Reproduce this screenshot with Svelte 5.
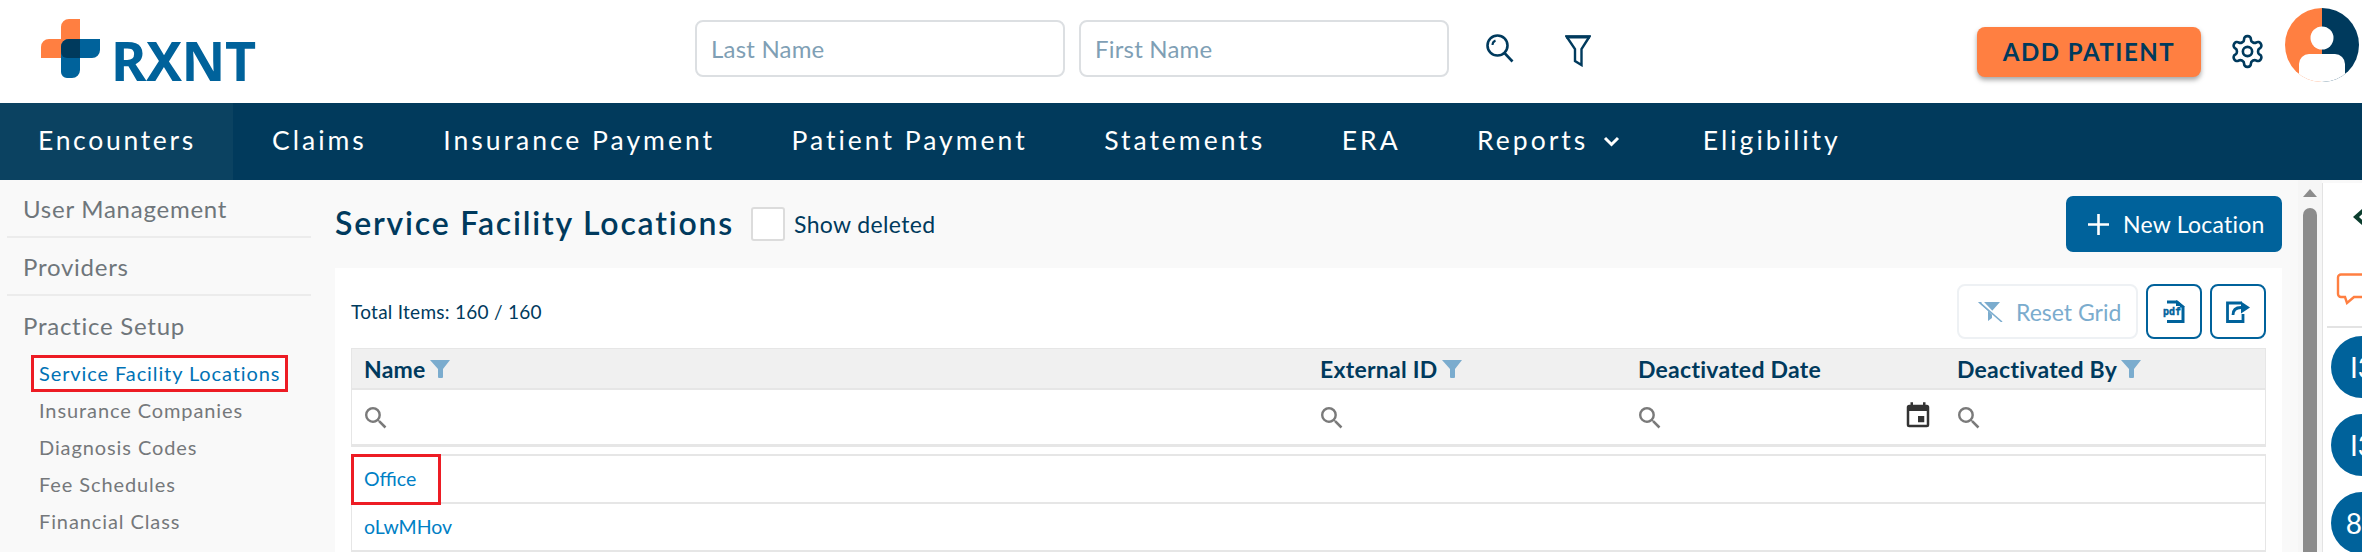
<script>
	const tabs = ['Encounters', 'Claims', 'Insurance Payment', 'Patient Payment', 'Statements', 'ERA', 'Reports', 'Eligibility'];
	const subItems = ['Service Facility Locations', 'Insurance Companies', 'Diagnosis Codes', 'Fee Schedules', 'Financial Class', 'Payment Codes'];
	const columns = [
		{ name: 'Name', filter: true },
		{ name: 'External ID', filter: true },
		{ name: 'Deactivated Date', filter: false },
		{ name: 'Deactivated By', filter: true }
	];
	const rows = ['Office', 'oLwMHov'];
	const people = ['I3', 'I3', '80'];
	const searchPath =
		'M15.5 14h-.79l-.28-.27A6.471 6.471 0 0 0 16 9.5 6.5 6.5 0 1 0 9.5 16c1.61 0 3.09-.59 4.23-1.57l.27.28v.79l5 4.99L20.49 19l-4.99-5zm-6 0C7.01 14 5 11.99 5 9.5S7.01 5 9.5 5 14 7.01 14 9.5 11.99 14 9.5 14z';
</script>

<div class="page">
	<header class="top">
		<div class="logo">
			<svg width="59" height="59" viewBox="0 0 59 59">
				<path fill="#ff7f41" d="M28 0H39V39H0V28a8 8 0 0 1 8-8H20V8a8 8 0 0 1 8-8z" />
				<path fill="#00629b" d="M28 20H59V31a8 8 0 0 1-8 8H39V51a8 8 0 0 1-8 8H26a6 6 0 0 1-6-6V28a8 8 0 0 1 8-8z" />
				<path fill="#003a5d" d="M28 20H39V39H26a6 6 0 0 1-6-6V28a8 8 0 0 1 8-8z" />
			</svg>
			<span class="logo-text">RXNT</span>
		</div>
		<div class="search">
			<input class="name-input" placeholder="Last Name" />
			<input class="name-input" placeholder="First Name" />
			<svg class="search-icon" width="28" height="30" viewBox="0 0 28 30" fill="none" stroke="#003a5d" stroke-width="2.6">
				<circle cx="11.5" cy="11.5" r="10" />
				<path d="M6.5 11a5 5 0 0 1 3-4.500" stroke-width="2" />
				<path d="M18.500 19l8 8.500" />
			</svg>
			<svg class="funnel-icon" width="26" height="32" viewBox="0 0 26 32" fill="none" stroke="#003a5d" stroke-width="2.4">
				<path d="M1.500 1.500H24.500L16.500 14V30L10 26V14z" />
				<path d="M1 2H25" stroke-width="3" />
			</svg>
		</div>
		<div class="actions">
			<button class="add-patient">ADD PATIENT</button>
			<svg width="37" height="37" viewBox="0 0 24 24" fill="none" stroke="#003a5d" stroke-width="1.700">
				<path d="M12.220 2h-.44a2 2 0 0 0-2 2v.18a2 2 0 0 1-1 1.730l-.43.25a2 2 0 0 1-2 0l-.15-.08a2 2 0 0 0-2.730.73l-.22.38a2 2 0 0 0 .73 2.730l.15.1a2 2 0 0 1 1 1.720v.51a2 2 0 0 1-1 1.740l-.15.09a2 2 0 0 0-.73 2.730l.22.38a2 2 0 0 0 2.730.73l.15-.08a2 2 0 0 1 2 0l.43.25a2 2 0 0 1 1 1.730V20a2 2 0 0 0 2 2h.44a2 2 0 0 0 2-2v-.18a2 2 0 0 1 1-1.730l.43-.25a2 2 0 0 1 2 0l.15.08a2 2 0 0 0 2.730-.73l.22-.39a2 2 0 0 0-.73-2.730l-.15-.08a2 2 0 0 1-1-1.740v-.5a2 2 0 0 1 1-1.740l.15-.09a2 2 0 0 0 .73-2.730l-.22-.38a2 2 0 0 0-2.730-.73l-.15.08a2 2 0 0 1-2 0l-.43-.25a2 2 0 0 1-1-1.730V4a2 2 0 0 0-2-2z" />
				<circle cx="12" cy="12" r="3" />
			</svg>
			<svg class="avatar" width="74" height="74" viewBox="0 0 74 74">
				<clipPath id="avatar-clip"><circle cx="37" cy="37" r="37" /></clipPath>
				<g clip-path="url(#avatar-clip)">
					<rect width="37" height="74" fill="#ff7f41" />
					<rect x="37" width="37" height="74" fill="#003a5d" />
					<circle cx="37" cy="30" r="11.500" fill="#fff" />
					<path fill="#fff" d="M14 74V56a10 10 0 0 1 10-10H50a10 10 0 0 1 10 10V74z" />
				</g>
			</svg>
		</div>
	</header>

	<nav class="tabs">
		{#each tabs as tab, i}
			<div class="tab" class:current={i === 0}>
				{tab}
				{#if tab === 'Reports'}
					<svg width="17" height="11" viewBox="0 0 17 11" fill="none" stroke="#fff" stroke-width="3">
						<path d="M2 2l6.500 6.500L15 2" />
					</svg>
				{/if}
			</div>
		{/each}
	</nav>

	<div class="body">
		<aside class="side">
			<div class="side-row">User Management</div>
			<div class="side-row">Providers</div>
			<div class="side-row open">Practice Setup</div>
			<div class="sub-list">
				{#each subItems as item, i}
					<div class="sub-item" class:marked={i === 0}>{item}</div>
				{/each}
			</div>
		</aside>

		<main class="main">
			<div class="page-head">
				<h1>Service Facility Locations</h1>
				<span class="checkbox"></span>
				<span class="show-deleted">Show deleted</span>
				<button class="new-location">
					<svg width="21" height="21" viewBox="0 0 21 21" stroke="#fff" stroke-width="2.600">
						<path d="M10.500 0V21M0 10.500H21" />
					</svg>
					New Location
				</button>
			</div>

			<section class="card">
				<div class="toolbar">
					<span class="total">Total Items: 160 / 160</span>
					<button class="reset">
						<svg width="25" height="20" viewBox="0 0 25 20">
							<path fill="#7bacce" d="M0 0H22L14 9V16L10 19V9z" />
							<path stroke="#fff" stroke-width="3" d="M4 0L22 19" />
							<path stroke="#7bacce" stroke-width="1.600" d="M1 0L24 20" />
						</svg>
						Reset Grid
					</button>
					<button class="square">
						<svg width="22" height="23" viewBox="0 0 22 23">
							<path fill="none" stroke="#00629b" stroke-width="3" d="M4 2H14L20 7V21.500H4" />
							<path fill="#00629b" d="M13 0L22 7H13z" />
							<rect y="6" width="17" height="11" fill="#fff" />
							<text x="0" y="15" class="pdf-label">pdf</text>
						</svg>
					</button>
					<button class="square">
						<svg width="24" height="23" viewBox="0 0 24 23" fill="none" stroke="#00629b" stroke-width="2.800">
							<path d="M16 3H1.500V21.500H17V14" />
							<path d="M7 15c0-5 3-7.500 8-7.500" />
							<path fill="#00629b" stroke="none" d="M15 1.500L24 7.500L15 13.500z" />
						</svg>
					</button>
				</div>

				<div class="grid head">
					{#each columns as col}
						<div class="head-cell">
							{col.name}
							{#if col.filter}
								<svg width="20" height="18" viewBox="0 0 20 18">
									<path fill="#7bacce" d="M0 0H20L13 9V17a1 1 0 0 1-1 1H9a1 1 0 0 1-1-1V9z" />
								</svg>
							{/if}
						</div>
					{/each}
				</div>
				<div class="grid filters">
					{#each columns as col}
						<div class="filter-cell">
							<svg width="22" height="22" viewBox="3 3 18 18" fill="#7a7a7a"><path d={searchPath} /></svg>
							{#if col.name === 'Deactivated Date'}
								<svg class="calendar" width="30" height="30" viewBox="0 0 24 24" fill="#333">
									<path d="M19 3h-1V1h-2v2H8V1H6v2H5a2 2 0 0 0-2 2v14a2 2 0 0 0 2 2h14a2 2 0 0 0 2-2V5a2 2 0 0 0-2-2zm0 16H5V8h14v11zM17 12h-5v5h5z" />
								</svg>
							{/if}
						</div>
					{/each}
				</div>
				<div class="rows">
					{#each rows as row, i}
						<div class="row">
							<a class="row-link" class:marked-link={i === 0} href="#top">{row}</a>
						</div>
					{/each}
				</div>
			</section>
		</main>

		<div class="scrollbar">
			<span class="arrow"></span>
			<span class="thumb"></span>
		</div>

		<aside class="panel">
			<svg class="back" width="20" height="22" viewBox="0 0 20 22" fill="none" stroke="#0b3d2e" stroke-width="4">
				<path d="M13 2L3 11l10 9" />
			</svg>
			<svg class="chat" width="40" height="32" viewBox="0 0 40 32" fill="none" stroke="#ff7f41" stroke-width="2.400">
				<path d="M40 1.500H5a3 3 0 0 0-3 3V21a3 3 0 0 0 3 3H9L11 30L18 24H40" />
			</svg>
			<div class="people">
				{#each people as p}
					<div class="person">{p}</div>
				{/each}
			</div>
		</aside>
	</div>
</div>

<style>
	:global(body) {
		margin: 0;
		overflow: hidden;
		background: #fff;
	}

	.page {
		width: 2362px;
		height: 552px;
		overflow: hidden;
		font-family: Lato, 'Noto Sans', sans-serif;
		color: #003a5d;
	}

	button {
		font-family: inherit;
		cursor: pointer;
	}

	/* top bar */
	.top {
		height: 103px;
		display: grid;
		grid-template-columns: 695px 1fr auto;
		align-items: center;
		box-sizing: border-box;
		padding-right: 3px;
	}

	.logo {
		display: flex;
		align-items: flex-start;
		padding-left: 41px;
		height: 59px;
		margin-top: -6px;
		gap: 11px;
	}

	.logo-text {
		font-family: 'Noto Sans', sans-serif;
		font-weight: 700;
		font-size: 54px;
		line-height: 59px;
		color: #00629b;
		margin-top: 12px;
		letter-spacing: -0.5px;
	}

	.search {
		display: flex;
		align-items: center;
		gap: 14px;
		margin-top: -6px;
	}

	.name-input {
		width: 370px;
		height: 57px;
		box-sizing: border-box;
		border: 2px solid #dcdfe2;
		border-radius: 8px;
		padding: 0 14px;
		font-family: inherit;
		font-size: 24px;
		letter-spacing: 0.2px;
		outline: none;
	}

	.name-input::placeholder {
		color: #7f9fb5;
		opacity: 1;
	}

	.search-icon {
		margin-left: 23px;
	}

	.funnel-icon {
		margin-left: 37px;
		margin-top: 4px;
	}

	.actions {
		display: flex;
		align-items: center;
	}

	.add-patient {
		width: 224px;
		height: 50px;
		border: none;
		border-radius: 8px;
		background: #ff7f41;
		color: #003a5d;
		font-weight: 700;
		font-size: 24px;
		letter-spacing: 1.500px;
		box-shadow: 0 3px 5px rgba(0, 0, 0, 0.35);
		margin-right: 28px;
	}

	.avatar {
		margin-left: 19px;
		margin-top: -14px;
	}

	/* main nav */
	.tabs {
		height: 77px;
		background: #013a5c;
		display: flex;
		color: #fff;
	}

	.tab {
		display: flex;
		align-items: center;
		gap: 15px;
		padding: 0 37.5px 4px 39px;
		font-size: 26.5px;
		letter-spacing: 3px;
	}

	.tab.current {
		background: #0b4261;
		padding-left: 38px;
		padding-right: 37px;
		letter-spacing: 2.700px;
	}

	.tab svg {
		margin: 3px 6px 0 0;
	}

	/* body */
	.body {
		height: 372px;
		display: grid;
		grid-template-columns: 335px 1fr 24px 40px;
		background: #f9f9f9;
		overflow: hidden;
	}

	.side {
		padding-left: 7px;
		width: 304px;
		color: #6f767b;
	}

	.side-row {
		height: 58px;
		box-sizing: border-box;
		display: flex;
		align-items: center;
		padding-left: 16px;
		font-size: 24px;
		letter-spacing: 0.750px;
		border-bottom: 2px solid #ececec;
	}

	.side-row.open {
		border-bottom: none;
		height: 59px;
		padding-bottom: 1px;
	}

	.sub-list {
		padding-left: 24px;
	}

	.sub-item {
		height: 37px;
		box-sizing: border-box;
		width: fit-content;
		display: flex;
		align-items: center;
		padding: 0 5px 2px;
		border: 3px solid transparent;
		font-size: 20px;
		letter-spacing: 0.900px;
		color: #75787b;
	}

	.sub-item.marked {
		border-color: #ed1c24;
		background: #fff;
		color: #0072b5;
	}

	.main {
		padding-right: 16px;
		min-width: 0;
	}

	.page-head {
		height: 88px;
		display: flex;
		align-items: center;
	}

	h1 {
		margin: 0;
		padding-bottom: 3px;
		font-family: 'Lato Semibold', Lato, sans-serif;
		font-size: 32px;
		font-weight: 600;
		letter-spacing: 1.800px;
		color: #003a5d;
	}

	.checkbox {
		width: 34px;
		height: 34px;
		box-sizing: border-box;
		background: #fff;
		border: 2px solid #dcdcdc;
		border-radius: 3px;
		margin-left: 17px;
	}

	.show-deleted {
		margin-left: 9px;
		font-size: 23px;
		letter-spacing: 0.350px;
	}

	.new-location {
		margin-left: auto;
		width: 216px;
		height: 56px;
		display: flex;
		align-items: center;
		gap: 14px;
		padding: 0 0 0 22px;
		border: none;
		border-radius: 7px;
		background: #00629b;
		color: #fff;
		font-size: 23px;
		letter-spacing: 0.250px;
	}

	.card {
		background: #fff;
		padding: 0 16px;
		height: 284px;
	}

	.toolbar {
		height: 80px;
		box-sizing: border-box;
		padding: 16px 0 9px;
		display: flex;
		align-items: center;
		gap: 8px;
	}

	.total {
		font-size: 19px;
		letter-spacing: 0.270px;
		margin-right: auto;
	}

	.reset {
		width: 181px;
		height: 55px;
		display: flex;
		align-items: center;
		gap: 13px;
		padding: 0 0 0 19px;
		background: #fff;
		border: 2px solid #eef1f4;
		border-radius: 8px;
		color: #7bacce;
		font-size: 23px;
	}

	.square {
		width: 56px;
		height: 55px;
		padding: 0;
		display: grid;
		place-items: center;
		background: #fff;
		border: 2px solid #00629b;
		border-radius: 8px;
	}

	.pdf-label {
		font-family: 'DejaVu Sans Mono', monospace;
		font-weight: 700;
		font-size: 10px;
		fill: #00629b;
		stroke: #00629b;
		stroke-width: 0.4px;
	}

	.grid {
		display: grid;
		grid-template-columns: 956px 318px 319px 1fr;
	}

	.head {
		height: 42px;
		box-sizing: border-box;
		background: #f0f0f0;
		border: 1px solid #e6e6e6;
		border-bottom-width: 2px;
	}

	.head-cell {
		display: flex;
		align-items: center;
		gap: 4px;
		padding-left: 12px;
		font-size: 23px;
		font-weight: 700;
		letter-spacing: 0.250px;
	}

	.filters {
		height: 57px;
		box-sizing: border-box;
		border: 1px solid #e6e6e6;
		border-top: none;
		border-bottom-width: 3px;
	}

	.filter-cell {
		display: flex;
		align-items: center;
		justify-content: space-between;
		padding: 0 12px 0 13px;
		margin-top: 1px;
	}

	.calendar {
		margin: -3px 0 0 0;
	}

	.rows {
		margin-top: 7px;
		border: 1px solid #e6e6e6;
		border-top-width: 2px;
		border-bottom: none;
	}

	.row {
		height: 48px;
		box-sizing: border-box;
		display: flex;
		align-items: center;
		padding: 0 0 2px 12px;
		border-bottom: 2px solid #e6e6e6;
		position: relative;
	}

	.row-link {
		color: #0080c5;
		font-size: 19.5px;
		text-decoration: none;
	}

	.row-link.marked-link::after {
		content: '';
		position: absolute;
		left: -1px;
		top: -2px;
		width: 90px;
		height: 51px;
		box-sizing: border-box;
		border: 3px solid #ed1c24;
	}

	/* fake scrollbar */
	.scrollbar {
		background: #f6f6f6;
		display: flex;
		flex-direction: column;
		align-items: center;
	}

	.arrow {
		margin-top: 9px;
		border-left: 7px solid transparent;
		border-right: 7px solid transparent;
		border-bottom: 8px solid #8c8c8c;
	}

	.thumb {
		margin-top: 11px;
		width: 14px;
		flex: 1;
		border-radius: 7px 7px 0 0;
		background: #8c8c8c;
	}

	/* chat panel */
	.panel {
		margin-top: 3px;
		background: #fff;
		border-left: 1px solid #e3e3e3;
		display: flex;
		flex-direction: column;
		overflow: hidden;
	}

	.back {
		margin: 23px 0 0 30px;
		flex: none;
	}

	.chat {
		margin: 45px 0 0 13px;
		flex: none;
	}

	.people {
		margin: 21px 0 0 4px;
		padding: 8px 0 0 4px;
		border-top: 2px solid #e3e3e3;
		display: flex;
		flex-direction: column;
		gap: 16px;
	}

	.person {
		width: 62px;
		height: 62px;
		flex: none;
		border-radius: 50%;
		background: #00629b;
		color: #fff;
		font-size: 28px;
		line-height: 62px;
		text-align: center;
	}
</style>
